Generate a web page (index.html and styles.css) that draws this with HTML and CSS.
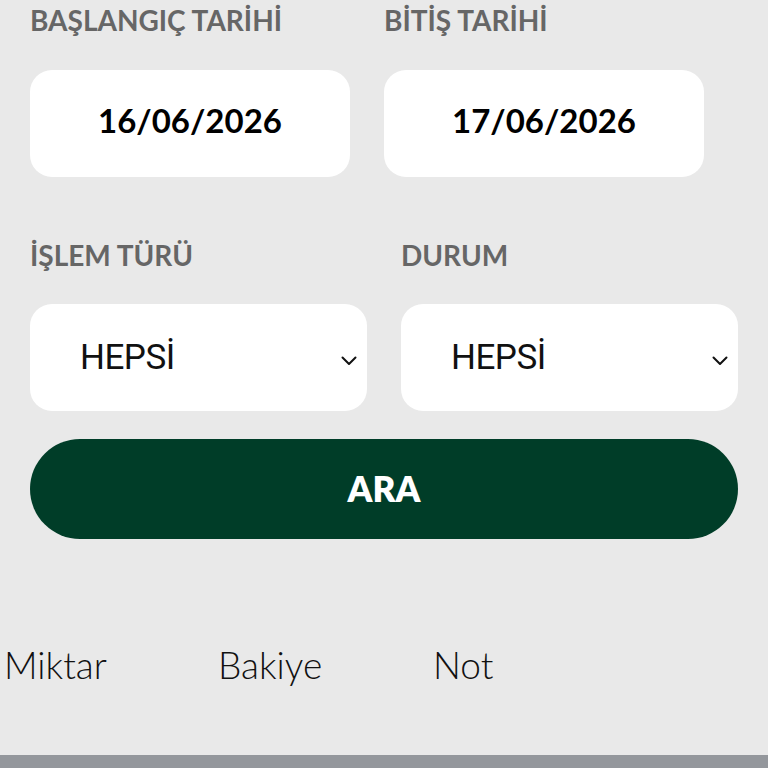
FILE: index.html
```html
<!DOCTYPE html>
<html lang="tr">
<head>
<meta charset="utf-8">
<link rel="stylesheet" href="styles.css">
</head>
<body>
<div class="page">
  <div class="dates">
    <div class="field">
      <div class="label">BAŞLANGIÇ TARİHİ</div>
      <div class="datebox">16/06/2026</div>
    </div>
    <div class="field">
      <div class="label">BİTİŞ TARİHİ</div>
      <div class="datebox">17/06/2026</div>
    </div>
  </div>
  <div class="selects">
    <div class="field">
      <div class="label">İŞLEM TÜRÜ</div>
      <div class="selectbox"><span class="seltext">HEPSİ</span>
        <svg class="chev" width="16" height="10" viewBox="0 0 16 10"><path d="M1.5 1.5 L8 8 L14.5 1.5" fill="none" stroke="#111" stroke-width="2" stroke-linecap="round" stroke-linejoin="round"/></svg>
      </div>
    </div>
    <div class="field">
      <div class="label">DURUM</div>
      <div class="selectbox"><span class="seltext">HEPSİ</span>
        <svg class="chev" width="16" height="10" viewBox="0 0 16 10"><path d="M1.5 1.5 L8 8 L14.5 1.5" fill="none" stroke="#111" stroke-width="2" stroke-linecap="round" stroke-linejoin="round"/></svg>
      </div>
    </div>
  </div>
  <button class="search">ARA</button>
</div>
<div class="cols">
  <span class="col c1">Miktar</span>
  <span class="col c2">Bakiye</span>
  <span class="col c3">Not</span>
</div>
<div class="bottombar"></div>
</body>
</html>
```
FILE: styles.css
```css
html, body {
  margin: 0;
  padding: 0;
}
body {
  background: #e9e9e9;
  width: 768px;
  height: 768px;
  overflow: hidden;
  font-family: "Lato", "Liberation Sans", sans-serif;
  display: flex;
  flex-direction: column;
}
.page {
  padding: 2px 30px 0 30px;
}
.dates {
  display: grid;
  grid-template-columns: 320px 320px;
  column-gap: 34px;
}
.selects {
  display: grid;
  grid-template-columns: 337px 337px;
  column-gap: 34px;
  margin-top: 60px;
}
.field {
  display: flex;
  flex-direction: column;
}
.label {
  font-weight: 700;
  font-size: 28px;
  line-height: 36px;
  color: #666666;
  white-space: nowrap;
}
.datebox {
  margin-top: 32px;
  height: 107px;
  box-sizing: border-box;
  padding-bottom: 8px;
  background: #ffffff;
  border-radius: 22px;
  display: flex;
  align-items: center;
  justify-content: center;
  font-weight: 700;
  font-size: 33px;
  color: #000;
}
.selectbox {
  margin-top: 31px;
  height: 107px;
  background: #ffffff;
  border-radius: 22px;
  display: flex;
  align-items: center;
  padding: 0 10px 0 50px;
}
.seltext {
  flex: 1;
  font-family: "Roboto", sans-serif;
  font-size: 35px;
  color: #111;
  letter-spacing: -0.5px;
}
.chev {
  display: block;
  margin-top: 6px;
}
.search {
  margin-top: 28px;
  width: 708px;
  height: 100px;
  border: none;
  border-radius: 50px;
  background: #003d28;
  color: #ffffff;
  font-family: "Lato", "Liberation Sans", sans-serif;
  font-weight: 800;
  font-size: 35px;
  padding-bottom: 4px;
  display: block;
}
.cols {
  margin-top: 102px;
  display: flex;
  font-family: "Lato", sans-serif;
  font-weight: 300;
  font-size: 37px;
  color: #111;
  height: 48px;
  line-height: 48px;
}
.col {
  display: block;
}
.c1 { width: 214px; padding-left: 4px; }
.c2 { width: 215px; }
.bottombar {
  margin-top: auto;
  height: 13px;
  background: #94979c;
}
```
